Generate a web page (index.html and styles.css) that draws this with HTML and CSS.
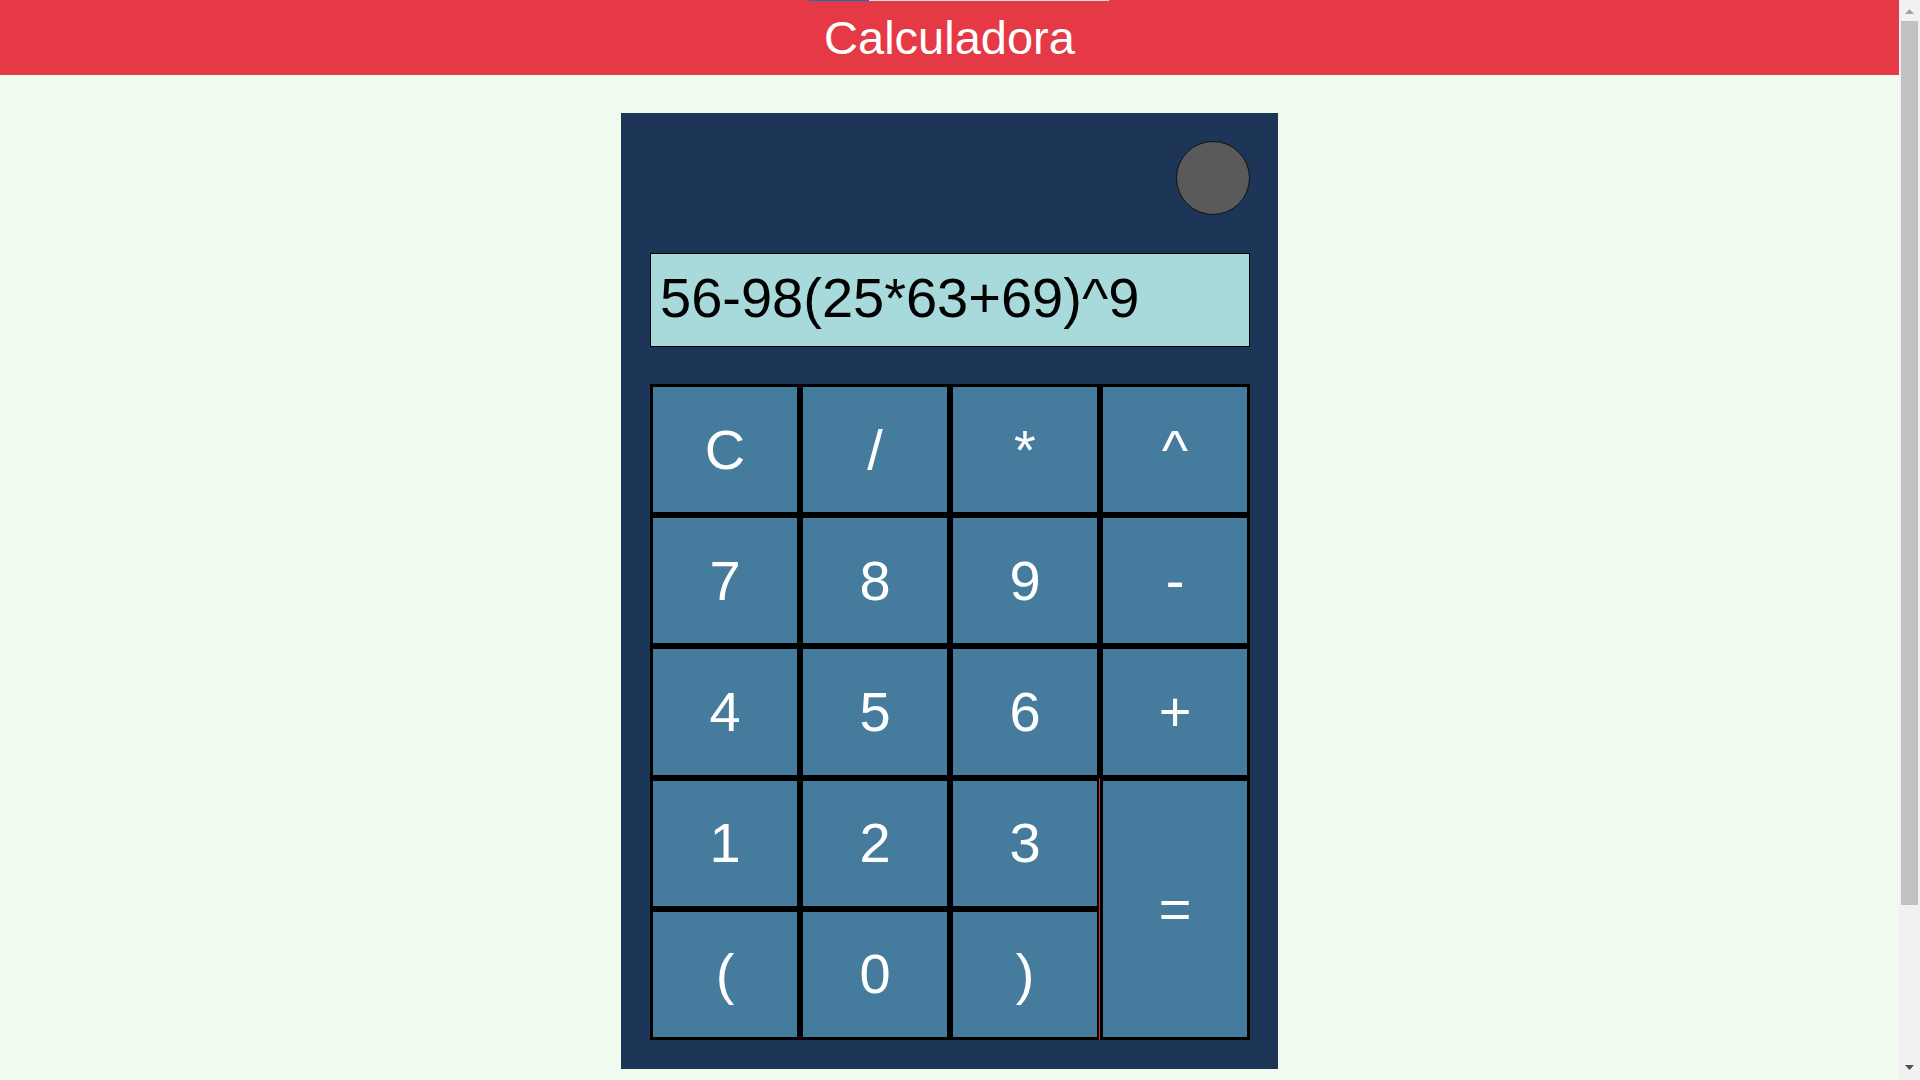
FILE: index.html
```html
<!DOCTYPE html>
<html lang="es">
<head>
<meta charset="utf-8">
<title>Calculadora</title>
<link rel="stylesheet" href="styles.css">
</head>
<body>
<div class="loadbar"><span class="loadbar-fill"></span></div>
<header class="header">
  <h1 class="title">Calculadora</h1>
</header>
<main class="calc">
  <div class="calc-top">
    <div class="power"></div>
  </div>
  <div class="screen">56-98(25*63+69)^9</div>
  <div class="keys">
    <button class="key">C</button>
    <button class="key">/</button>
    <button class="key">*</button>
    <button class="key">^</button>
    <button class="key">7</button>
    <button class="key">8</button>
    <button class="key">9</button>
    <button class="key">-</button>
    <button class="key">4</button>
    <button class="key">5</button>
    <button class="key">6</button>
    <button class="key">+</button>
    <button class="key">1</button>
    <button class="key">2</button>
    <button class="key">3</button>
    <button class="key key-equal">=</button>
    <button class="key">(</button>
    <button class="key">0</button>
    <button class="key">)</button>
  </div>
</main>
<div class="scrollbar" aria-hidden="true">
  <div class="sb-btn">
    <svg width="9" height="5" viewBox="0 0 9 5"><polygon points="4.5,0 9,5 0,5" fill="#a3a3a3"/></svg>
  </div>
  <div class="sb-track"><div class="sb-thumb"></div></div>
  <div class="sb-btn sb-btn-down">
    <svg width="9" height="5" viewBox="0 0 9 5"><polygon points="0,0 9,0 4.5,5" fill="#505050"/></svg>
  </div>
</div>
</body>
</html>
```

FILE: styles.css
```css
html {
  background: #f1faee;
}

body {
  margin: 0 21px 0 0;
  background: #f1faee;
  font-family: "Liberation Sans", Arial, sans-serif;
}

.loadbar {
  position: absolute;
  top: 0;
  left: 809px;
  width: 300px;
  height: 1px;
  background: #dcdcdc;
  display: flex;
}

.loadbar-fill {
  width: 60px;
  background: #1669d3;
}

.header {
  background: #e63946;
  padding: 11px 0;
}

.title {
  margin: 0;
  font-size: 47px;
  line-height: 53px;
  font-weight: normal;
  color: #ffffff;
  text-align: center;
}

.calc {
  width: 600px;
  margin: 38px auto 199px;
  padding: 28px 28px 29px 29px;
  background: #1d3557;
  display: flex;
  flex-direction: column;
}

.calc-top {
  display: flex;
  justify-content: flex-end;
  margin-bottom: 38px;
}

.power {
  width: 72px;
  height: 72px;
  border-radius: 50%;
  background: #5a5a5a;
  border: 1px solid #111111;
}

.screen {
  box-sizing: border-box;
  height: 94px;
  padding: 12px 9px 16px;
  background: #a8dadc;
  border: 1px solid #000000;
  color: #000000;
  font-size: 56px;
  line-height: 64px;
  white-space: nowrap;
  margin-bottom: 37px;
}

.keys {
  display: grid;
  grid-template-columns: repeat(4, 150px);
  grid-template-rows: repeat(5, 1fr);
  height: 656px;
}

.key {
  box-sizing: border-box;
  margin: 0;
  padding: 0;
  border: 3px solid #000000;
  background: #457b9d;
  color: #ffffff;
  font-family: "Liberation Sans", Arial, sans-serif;
  font-size: 56px;
  line-height: 1;
  display: flex;
  align-items: center;
  justify-content: center;
}

.key-equal {
  grid-column: 4;
  grid-row: 4 / span 2;
  position: relative;
  box-shadow: -1px 0 0 #d42a45;
}

.scrollbar {
  position: fixed;
  top: 0;
  right: 0;
  width: 21px;
  height: 100vh;
  background: #f1f1f1;
  display: flex;
  flex-direction: column;
}

.sb-btn {
  height: 21px;
  flex: none;
  display: flex;
  justify-content: center;
  align-items: flex-start;
  padding-top: 9px;
  box-sizing: border-box;
}

.sb-btn svg {
  display: block;
}

.sb-btn-down {
  padding-top: 6px;
}

.sb-track {
  flex: 1;
  display: flex;
  flex-direction: column;
}

.sb-thumb {
  height: 884px;
  margin: 0 2px;
  background: #c1c1c1;
}
```
